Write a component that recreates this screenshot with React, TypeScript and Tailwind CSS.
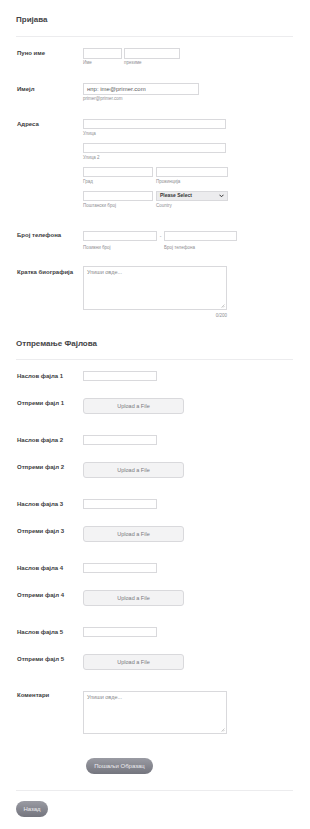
import React from "react";

const font = { fontFamily: '"Liberation Sans", Arial, sans-serif' };

function Label({ children, pt = 0 }: { children: React.ReactNode; pt?: number }) {
  return (
    <div className="w-[67px] shrink-0 pl-[1px] text-[6px] leading-[8px] font-bold text-[#3b3b3d]" style={{ paddingTop: pt }}>
      {children}
    </div>
  );
}

function Sub({ children, className = "" }: { children: React.ReactNode; className?: string }) {
  return <div className={"text-[4.5px] leading-[6px] text-[#8e8e92] " + className}>{children}</div>;
}

const inputCls = "h-[10px] border border-[#d9d9dc] bg-white";

function FilePair({ n, first }: { n: number; first?: boolean }) {
  return (
    <>
      <div className={"flex " + (first ? "mt-[11px]" : "mt-[21px]")}>
        <Label pt={1}>Наслов фајла {n}</Label>
        <div className={inputCls + " w-[74px]"} />
      </div>
      <div className="flex mt-[17px]">
        <Label pt={1}>Отпреми фајл {n}</Label>
        <div className="w-[101px] h-[16px] rounded-[3px] border border-[#d9d9dc] bg-[#f3f3f4] flex items-center justify-center text-[5.5px] text-[#77777c]">
          Upload a File
        </div>
      </div>
    </>
  );
}

export default function App() {
  return (
    <div className="w-[310px] h-[829px] bg-white overflow-hidden" style={font}>
      <div className="pl-[16px] w-[293px]">
        <div className="pt-[15px] text-[8px] leading-[10px] font-semibold text-[#444446]">Пријава</div>
        <div className="mt-[11px] h-px bg-[#ececee]" />

        {/* Full name */}
        <div className="flex mt-[11px]">
          <Label pt={1}>Пуно име</Label>
          <div className="flex gap-[2px]">
            <div>
              <div className={inputCls + " h-[11px] w-[39px]"} />
              <Sub className="mt-[1px]">Име</Sub>
            </div>
            <div>
              <div className={inputCls + " h-[11px] w-[56px]"} />
              <Sub className="mt-[1px]">презиме</Sub>
            </div>
          </div>
        </div>

        {/* Email */}
        <div className="flex mt-[17px]">
          <Label pt={2}>Имејл</Label>
          <div>
            <div className="h-[12px] w-[116px] border border-[#d9d9dc] bg-white flex items-center pl-[3px] text-[6px] text-[#5c5c60]">
              нпр: ime@primer.com
            </div>
            <Sub className="mt-[1px]">primer@primer.com</Sub>
          </div>
        </div>

        {/* Address */}
        <div className="flex mt-[17px]">
          <Label pt={1}>Адреса</Label>
          <div>
            <div className={inputCls + " w-[143px]"} />
            <Sub className="mt-[2px]">Улица</Sub>
            <div className={inputCls + " w-[143px] mt-[6px]"} />
            <Sub className="mt-[2px]">Улица 2</Sub>
            <div className="flex gap-[3px] mt-[6px]">
              <div>
                <div className={inputCls + " w-[70px]"} />
                <Sub className="mt-[2px]">Град</Sub>
              </div>
              <div>
                <div className={inputCls + " w-[72px]"} />
                <Sub className="mt-[2px]">Провинција</Sub>
              </div>
            </div>
            <div className="flex gap-[3px] mt-[6px]">
              <div>
                <div className={inputCls + " w-[70px]"} />
                <Sub className="mt-[2px]">Поштански број</Sub>
              </div>
              <div>
                <div className="h-[10px] w-[72px] border border-[#d9d9dc] bg-[#ececee] flex items-center justify-between px-[3px] text-[5px] font-bold text-[#333335]">
                  <span>Please Select</span>
                  <svg width="5" height="4" viewBox="0 0 10 7">
                    <path d="M1 1 L5 5 L9 1" fill="none" stroke="#333" strokeWidth="2" />
                  </svg>
                </div>
                <Sub className="mt-[2px]">Country</Sub>
              </div>
            </div>
          </div>
        </div>

        {/* Phone */}
        <div className="flex mt-[22px]">
          <Label>Број телефона</Label>
          <div className="flex">
            <div>
              <div className={inputCls + " w-[74px]"} />
              <Sub className="mt-[4px]">Позивни број</Sub>
            </div>
            <div className="w-[7px] text-center text-[5px] leading-[10px] text-[#8e8e92]">-</div>
            <div>
              <div className={inputCls + " w-[73px]"} />
              <Sub className="mt-[4px]">Број телефона</Sub>
            </div>
          </div>
        </div>

        {/* Bio */}
        <div className="flex mt-[15px]">
          <Label pt={2}>Кратка биографија</Label>
          <div>
            <div className="relative h-[44px] w-[144px] border border-[#d9d9dc] bg-white pl-[3px] pt-[2px] text-[5.5px] leading-[7px] text-[#88888c]">
              Упиши овде...
              <svg className="absolute right-[1px] bottom-[1px]" width="4" height="4" viewBox="0 0 8 8">
                <path d="M7 1 L1 7 M7 4 L4 7" stroke="#999" strokeWidth="1" />
              </svg>
            </div>
            <Sub className="mt-[3px] text-right text-[3.5px]">0/200</Sub>
          </div>
        </div>

        <div className="mt-[20px] text-[8px] leading-[10px] font-semibold text-[#444446]">Отпремање Фајлова</div>
        <div className="mt-[10px] h-px bg-[#ececee]" />

        <FilePair n={1} first />
        <FilePair n={2} />
        <FilePair n={3} />
        <FilePair n={4} />
        <FilePair n={5} />

        {/* Comments */}
        <div className="flex mt-[21px]">
          <Label>Коментари</Label>
          <div className="relative h-[43px] w-[144px] border border-[#d9d9dc] bg-white pl-[3px] pt-[2px] text-[5.5px] leading-[7px] text-[#88888c]">
            Упиши овде...
            <svg className="absolute right-[1px] bottom-[1px]" width="4" height="4" viewBox="0 0 8 8">
              <path d="M7 1 L1 7 M7 4 L4 7" stroke="#999" strokeWidth="1" />
            </svg>
          </div>
        </div>

        <div className="mt-[24px] pl-[70px]">
          <div className="w-[67px] h-[16px] rounded-full bg-gradient-to-b from-[#9a9ba3] to-[#74757e] flex items-center justify-center text-[6px] text-[#ededf0]">
            Пошаљи Образац
          </div>
        </div>

        <div className="mt-[16px] h-px bg-[#ececee]" />

        <div className="mt-[10px] w-[32px] h-[16px] rounded-full bg-gradient-to-b from-[#9a9ba3] to-[#74757e] flex items-center justify-center text-[6px] text-[#ededf0]">
          Назад
        </div>
      </div>
    </div>
  );
}
